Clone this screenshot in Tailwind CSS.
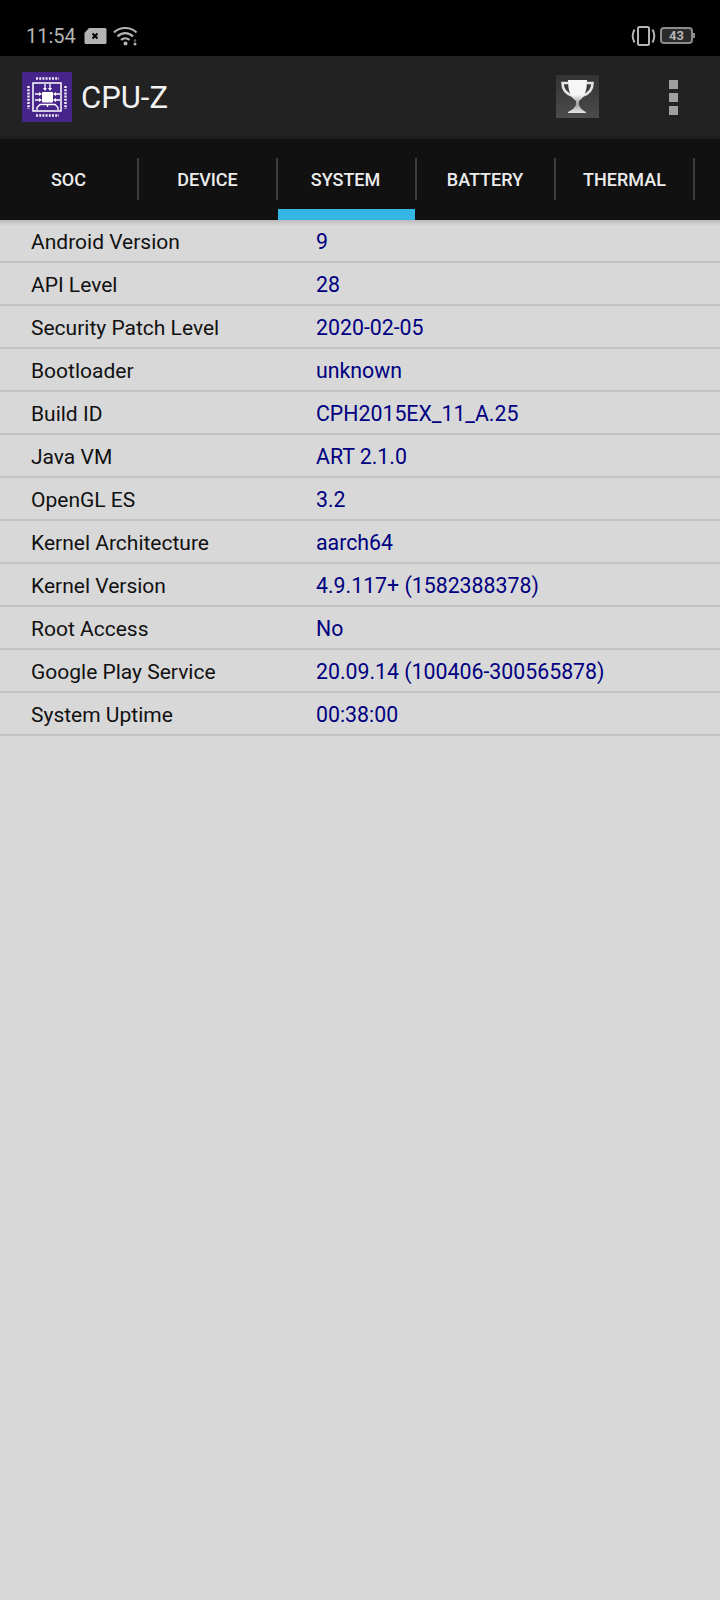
<!DOCTYPE html>
<html lang="en">
<head>
    <meta charset="UTF-8">
    <meta name="viewport" content="width=device-width, initial-scale=1.0">
    <title>CPU-Z</title>
    <script src="https://cdn.jsdelivr.net/npm/@tailwindcss/browser@4"></script>
</head>
<body class="w-[720px] h-[1600px] overflow-hidden bg-[#d8d8d8] font-['Roboto',sans-serif]">
    <!-- Status bar -->
    <div class="h-[56px] bg-black flex items-center justify-between pl-[26px] pr-[25px] pt-[15px] text-[#b4b4b4]">
        <div class="flex items-center">
            <span class="text-[20px] leading-none">11:54</span>
            <svg class="ml-[7px]" width="24" height="18" viewBox="0 0 24 18"><path d="M6 1h16a1.500 1.500 0 0 1 1.500 1.500v13a1.500 1.500 0 0 1-1.500 1.500H3a1.500 1.500 0 0 1-1.500-1.500V6z" fill="#b4b4b4"/><path d="M9.500 6.500l5 5m0-5l-5 5" stroke="#000" stroke-width="2"/></svg>
            <svg class="ml-[6px]" width="26" height="20" viewBox="0 0 26 20" fill="none" stroke="#b4b4b4" stroke-width="2.200"><path d="M1 6.500C7 .5 17.500 .5 23.500 6.500"/><path d="M4.500 10.500C9 6 15.500 6 20 10.500"/><path d="M8 14C10.500 11.800 14 11.800 16.500 14"/><circle cx="12.500" cy="17.500" r="2" fill="#b4b4b4" stroke="none"/><circle cx="22" cy="14.500" r="1.300" fill="#666" stroke="none"/><circle cx="22" cy="18" r="1.500" fill="#b4b4b4" stroke="none"/></svg>
        </div>
        <div class="flex items-center">
            <svg width="25" height="20" viewBox="0 0 25 20" fill="none" stroke="#b4b4b4" stroke-width="2"><rect x="7" y="1" width="11" height="18" rx="1.500"/><path d="M3.500 3.500C1 8 1 12 3.500 16.500M21.500 3.500C24 8 24 12 21.500 16.500"/></svg>
            <div class="ml-[4px] w-[33px] h-[17px] rounded-[4px] border-2 border-[#8c8c8c] bg-[#2a2a2a] flex items-center justify-center text-[13px] font-bold leading-none">43</div>
            <div class="w-[2px] h-[5px] bg-[#8c8c8c]"></div>
        </div>
    </div>

    <!-- App bar -->
    <div class="h-[83px] bg-[#222222] border-b-[3px] border-[#1d1d1d] flex items-center pl-[22px] pt-[1px]">
        <svg width="50" height="50" viewBox="0 0 50 50" class="shrink-0">
            <rect width="50" height="50" fill="#47248a"/>
            <rect x="11" y="11" width="28" height="28" fill="none" stroke="#fff" stroke-width="1.500"/>
            <rect x="20" y="20" width="11" height="10.500" rx="1" fill="#fff"/>
            <g stroke="#f0ecf8" stroke-width="2.500" stroke-dasharray="2 1.200">
                <path d="M14 6.500H37M14 43.500H37M6.500 14V37M43.500 14V37"/>
            </g>
            <g stroke="#fff" stroke-width="1.300" fill="none">
                <path d="M23 12V17M28 12V17M13 22H18M13 28H18M33 22H38M33 28H38M25.500 33V35M15 38V35.500L18 32.500H33L36 35.500V38"/>
            </g>
            <path d="M21 16H25L23 19ZM26 16H30L28 19ZM17 20V24L20 22ZM17 26V30L20 28ZM34 20V24L31 22ZM34 26V30L31 28Z" fill="#fff"/>
        </svg>
        <span class="ml-[9px] text-[31px] leading-none text-[#f2f2f2] pt-[1px]">CPU-Z</span>
        <div class="ml-[388px] w-[43px] h-[43px] bg-gradient-to-b from-[#333333] to-[#4c4c4c]">
            <svg width="43" height="43" viewBox="0 0 43 43">
                <defs><linearGradient id="cup" gradientUnits="userSpaceOnUse" x1="0" y1="5" x2="0" y2="38"><stop offset="0.45" stop-color="#f6f6f6"/><stop offset="0.72" stop-color="#9c9c9c"/><stop offset="1" stop-color="#e8e8e8"/></linearGradient></defs>
                <path d="M12 8H6.500C6.500 15 10 19 17 21M31 8H36.500C36.500 15 33 19 26 21" fill="none" stroke="#e4e4e4" stroke-width="2.600"/>
                <path d="M12 5H31C31 15 29 22 23 26V29C23 32 26 35 30 37V38H12V37C16 35 20 32 20 29V26C14 22 12 15 12 5Z" fill="url(#cup)"/>
            </svg>
        </div>
        <div class="ml-[70px] pt-[1px] flex flex-col gap-[4px]">
            <div class="w-[9px] h-[9px] bg-[#a0a0a0]"></div>
            <div class="w-[9px] h-[9px] bg-[#a0a0a0]"></div>
            <div class="w-[9px] h-[9px] bg-[#a0a0a0]"></div>
        </div>
    </div>

    <!-- Tabs -->
    <div class="h-[81px] bg-[#111111] flex">
        <div class="w-[139px] h-full flex items-center justify-center relative text-[18px] font-medium text-[#ececec] pb-[1px] pr-[2px]">SOC<div class="absolute right-0 top-[19px] h-[42px] w-[2px] bg-[#3c3c3c]"></div></div>
        <div class="w-[139px] h-full flex items-center justify-center relative text-[18px] font-medium text-[#ececec] pb-[1px] pr-[2px]">DEVICE<div class="absolute right-0 top-[19px] h-[42px] w-[2px] bg-[#3c3c3c]"></div></div>
        <div class="w-[139px] h-full flex items-center justify-center relative text-[18px] font-medium text-[#ececec] pb-[1px] pr-[4px]">SYSTEM<div class="absolute right-0 top-[19px] h-[42px] w-[2px] bg-[#3c3c3c]"></div><div class="absolute left-0 right-[2px] bottom-0 h-[11px] bg-[#33b5e5]"></div></div>
        <div class="w-[139px] h-full flex items-center justify-center relative text-[18px] font-medium text-[#ececec] pb-[1px] pr-[3px]">BATTERY<div class="absolute right-0 top-[19px] h-[42px] w-[2px] bg-[#3c3c3c]"></div></div>
        <div class="w-[139px] h-full flex items-center justify-center relative text-[18px] font-medium text-[#ececec] pb-[1px] pr-[2px]">THERMAL<div class="absolute right-0 top-[19px] h-[42px] w-[2px] bg-[#3c3c3c]"></div></div>
    </div>

    <!-- System info rows -->
    <div class="text-[21.3px] bg-[linear-gradient(#bcbcbc,#d8d8d8)] bg-no-repeat bg-[length:100%_6px]">
        <div class="h-[43px] flex items-baseline border-b-2 border-[#c4c4c4] pl-[31px] pt-[6px]"><span class="w-[285px] text-[21px] text-[#111111]">Android Version</span><span class="text-[#000080]">9</span></div>
        <div class="h-[43px] flex items-baseline border-b-2 border-[#c4c4c4] pl-[31px] pt-[6px]"><span class="w-[285px] text-[21px] text-[#111111]">API Level</span><span class="text-[#000080]">28</span></div>
        <div class="h-[43px] flex items-baseline border-b-2 border-[#c4c4c4] pl-[31px] pt-[6px]"><span class="w-[285px] text-[21px] text-[#111111]">Security Patch Level</span><span class="text-[#000080]">2020-02-05</span></div>
        <div class="h-[43px] flex items-baseline border-b-2 border-[#c4c4c4] pl-[31px] pt-[6px]"><span class="w-[285px] text-[21px] text-[#111111]">Bootloader</span><span class="text-[#000080]">unknown</span></div>
        <div class="h-[43px] flex items-baseline border-b-2 border-[#c4c4c4] pl-[31px] pt-[6px]"><span class="w-[285px] text-[21px] text-[#111111]">Build ID</span><span class="text-[#000080]">CPH2015EX_11_A.25</span></div>
        <div class="h-[43px] flex items-baseline border-b-2 border-[#c4c4c4] pl-[31px] pt-[6px]"><span class="w-[285px] text-[21px] text-[#111111]">Java VM</span><span class="text-[#000080]">ART 2.1.0</span></div>
        <div class="h-[43px] flex items-baseline border-b-2 border-[#c4c4c4] pl-[31px] pt-[6px]"><span class="w-[285px] text-[21px] text-[#111111]">OpenGL ES</span><span class="text-[#000080]">3.2</span></div>
        <div class="h-[43px] flex items-baseline border-b-2 border-[#c4c4c4] pl-[31px] pt-[6px]"><span class="w-[285px] text-[21px] text-[#111111]">Kernel Architecture</span><span class="text-[#000080]">aarch64</span></div>
        <div class="h-[43px] flex items-baseline border-b-2 border-[#c4c4c4] pl-[31px] pt-[6px]"><span class="w-[285px] text-[21px] text-[#111111]">Kernel Version</span><span class="text-[#000080]">4.9.117+ (1582388378)</span></div>
        <div class="h-[43px] flex items-baseline border-b-2 border-[#c4c4c4] pl-[31px] pt-[6px]"><span class="w-[285px] text-[21px] text-[#111111]">Root Access</span><span class="text-[#000080]">No</span></div>
        <div class="h-[43px] flex items-baseline border-b-2 border-[#c4c4c4] pl-[31px] pt-[6px]"><span class="w-[285px] text-[21px] text-[#111111]">Google Play Service</span><span class="text-[#000080]">20.09.14 (100406-300565878)</span></div>
        <div class="h-[43px] flex items-baseline border-b-2 border-[#c4c4c4] pl-[31px] pt-[6px]"><span class="w-[285px] text-[21px] text-[#111111]">System Uptime</span><span class="text-[#000080]">00:38:00</span></div>
    </div>
</body>
</html>
